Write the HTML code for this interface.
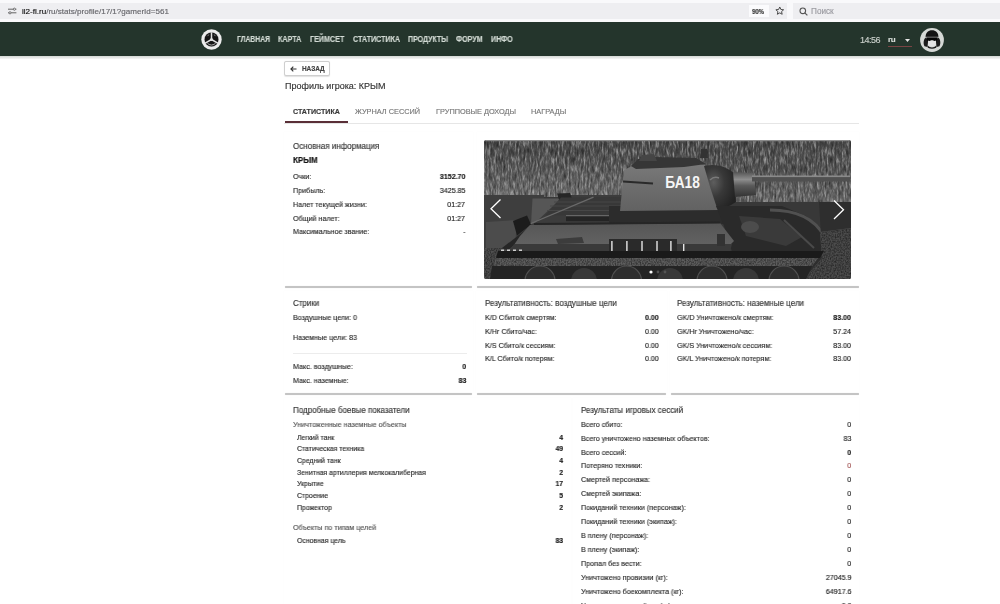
<!DOCTYPE html>
<html><head><meta charset="utf-8"><style>
html,body{margin:0;padding:0;}
body{width:1000px;height:604px;overflow:hidden;position:relative;background:#fff;font-family:"Liberation Sans",sans-serif;}
.t{position:absolute;white-space:nowrap;font-family:"Liberation Sans",sans-serif;-webkit-text-stroke:0.15px currentColor;will-change:transform;}
.nav{color:#d3dbd5;font-weight:bold;text-align:center;letter-spacing:-0.4px;}
</style></head><body>
<div style="position:absolute;left:0px;top:0px;width:1000px;height:22px;background:#f9f9fb;"></div>
<div style="position:absolute;left:0px;top:2.5px;width:787px;height:16.5px;background:#eeeef1;"></div>
<div style="position:absolute;left:793px;top:2.5px;width:207px;height:16.5px;background:#eeeef1;"></div>
<div style="position:absolute;left:748.5px;top:5px;width:20px;height:12px;background:#fbfbfd;"></div>
<div class="t" style="transform:scaleX(0.8562);transform-origin:0 0;top:8px;font-size:7px;line-height:7px;font-weight:bold;color:#333;left:752px;">90%</div>
<div class="t" style="top:8px;font-size:8.05px;line-height:8.05px;font-weight:normal;color:#66666b;left:22px;"><span style="color:#111">il2-fl.ru</span>/ru/stats/profile/17/1?gamerId=561</div>
<svg style="position:absolute;left:6.5px;top:7px" width="10" height="8" viewBox="0 0 10 8"><path d="M1 2.2h5.2M8.6 2.2h0.8M1 5.8h0.8M4.2 5.8h5.2" stroke="#555" stroke-width="0.9" fill="none"/><circle cx="7.4" cy="2.2" r="1.1" stroke="#555" stroke-width="0.8" fill="none"/><circle cx="3" cy="5.8" r="1.1" stroke="#555" stroke-width="0.8" fill="none"/></svg>
<svg style="position:absolute;left:774.5px;top:6px" width="9.5" height="9.5" viewBox="0 0 24 24"><path d="M12 2.5l2.9 6.3 6.9.7-5.2 4.6 1.5 6.8L12 17.4 5.9 20.9l1.5-6.8L2.2 9.5l6.9-.7z" stroke="#444" stroke-width="2.4" fill="none" stroke-linejoin="round"/></svg>
<svg style="position:absolute;left:798.5px;top:6.5px" width="9" height="9" viewBox="0 0 9 9"><circle cx="3.8" cy="3.8" r="2.8" stroke="#555" stroke-width="1.1" fill="none"/><path d="M5.8 5.8l2.6 2.6" stroke="#555" stroke-width="1.2"/></svg>
<div class="t" style="top:8px;font-size:8.2px;line-height:8.2px;font-weight:normal;color:#9a9aa0;left:811px;">Поиск</div>
<div style="position:absolute;left:0px;top:22px;width:1000px;height:34px;background:#24352c;"></div>
<div style="position:absolute;left:0px;top:55.6px;width:1000px;height:3.5px;background:linear-gradient(#d3d7d4,#f6f6f6);"></div>
<svg style="position:absolute;left:200.5px;top:28.5px" width="21" height="21" viewBox="0 0 21 21">
<circle cx="10.5" cy="10.5" r="10.2" fill="#ececec"/><circle cx="10.5" cy="10.5" r="7.6" fill="#cfcfcf"/>
<circle cx="10.5" cy="10.5" r="6.9" fill="#141414"/>
<path d="M10.5 10.5 L10.5 3.2 M10.5 10.5 L4.2 14.1 M10.5 10.5 L16.8 14.1" stroke="#e0e0e0" stroke-width="1.5"/>
<path d="M6.2 13.8 A5.2 5.2 0 0 0 14.8 13.8" stroke="#bdbdbd" stroke-width="0.9" fill="none"/>
<path d="M6.3 7.2 A5 5 0 0 1 8.2 5.6 M12.8 5.6 A5 5 0 0 1 14.7 7.2" stroke="#9a9a9a" stroke-width="0.8" fill="none"/>
<circle cx="10.5" cy="10.5" r="1.5" fill="#e0e0e0"/></svg>
<div class="t" style="transform:scaleX(0.8308);transform-origin:0 0;top:36px;font-size:8.2px;line-height:8.2px;font-weight:bold;color:#d3dbd5;left:237px;">ГЛАВНАЯ</div>
<div class="t" style="transform:scaleX(0.8736);transform-origin:0 0;top:36px;font-size:8.2px;line-height:8.2px;font-weight:bold;color:#d3dbd5;left:278px;">КАРТА</div>
<div class="t" style="transform:scaleX(0.8753);transform-origin:0 0;top:36px;font-size:8.2px;line-height:8.2px;font-weight:bold;color:#d3dbd5;left:310px;">ГЕЙМСЕТ</div>
<div class="t" style="transform:scaleX(0.8689);transform-origin:0 0;top:36px;font-size:8.2px;line-height:8.2px;font-weight:bold;color:#d3dbd5;left:352.5px;">СТАТИСТИКА</div>
<div class="t" style="transform:scaleX(0.8556);transform-origin:0 0;top:36px;font-size:8.2px;line-height:8.2px;font-weight:bold;color:#d3dbd5;left:407.5px;">ПРОДУКТЫ</div>
<div class="t" style="transform:scaleX(0.8718);transform-origin:0 0;top:36px;font-size:8.2px;line-height:8.2px;font-weight:bold;color:#d3dbd5;left:455.8px;">ФОРУМ</div>
<div class="t" style="transform:scaleX(0.8626);transform-origin:0 0;top:36px;font-size:8.2px;line-height:8.2px;font-weight:bold;color:#d3dbd5;left:491.3px;">ИНФО</div>
<div class="t" style="top:36px;font-size:9px;line-height:9px;font-weight:normal;color:#c9cfca;left:860px;letter-spacing:-0.5px;">14:56</div>
<div class="t" style="top:36px;font-size:8px;line-height:8px;font-weight:bold;color:#d8ddd9;left:887.5px;letter-spacing:-0.3px;">ru</div>
<svg style="position:absolute;left:904.5px;top:38.5px" width="5" height="3" viewBox="0 0 5 3"><path d="M0 0h5L2.5 3z" fill="#e8e8e8"/></svg>
<div style="position:absolute;left:887.5px;top:46px;width:24px;height:1px;background:#7a4444;"></div>
<svg style="position:absolute;left:920px;top:28px" width="24" height="24" viewBox="0 0 24 24">
<circle cx="12" cy="12" r="11.9" fill="#d6d9d6"/>
<path d="M5.6 9 C5.6 4.5 8.2 2.2 12 2.2 C15.8 2.2 18.4 4.5 18.4 9 Z" fill="#141414"/>
<path d="M5.8 9.5 C3.5 11 3 15.5 4.5 18.2 L7.5 19 L8.2 12Z M18.2 9.5 C20.5 11 21 15.5 19.5 18.2 L16.5 19 L15.8 12Z" fill="#1b1b1b"/>
<rect x="6" y="8.6" width="12" height="0.9" fill="#6a6a6a"/>
<path d="M6.6 9.5 H17.4 V11.8 Q16.8 13.3 14.6 12.9 L12 12.2 L9.4 12.9 Q7.2 13.3 6.6 11.8Z" fill="#050505"/>
<path d="M8.2 12.6 L9.4 13 L12 12.4 L14.6 13 L15.8 12.6 L15.8 16.8 Q12 20 8.2 16.8Z" fill="#e4e4e4"/>
<path d="M7.5 17.5 Q12 21.5 16.5 17.5 L16.2 19.8 Q12 21.6 7.8 19.8Z" fill="#1b1b1b"/>
</svg>
<div style="position:absolute;left:284px;top:61px;width:45.5px;height:14.5px;border:1px solid #cfcfcf;border-radius:2px;box-sizing:border-box;background:#fff;box-shadow:0 0.5px 1px rgba(0,0,0,.12);"></div>
<svg style="position:absolute;left:289.5px;top:65.5px" width="7" height="6" viewBox="0 0 7 6"><path d="M6.5 3H1M3.3 0.6L0.9 3l2.4 2.4" stroke="#333" stroke-width="1.1" fill="none"/></svg>
<div class="t" style="top:66px;font-size:6.5px;line-height:6.5px;font-weight:bold;color:#444;left:301.6px;letter-spacing:-0.1px;">НАЗАД</div>
<div class="t" style="top:82px;font-size:9px;line-height:9px;font-weight:normal;color:#333;left:284.8px;">Профиль игрока: КРЫМ</div>
<div class="t" style="top:109px;font-size:7.1px;line-height:7.1px;font-weight:bold;color:#3a3a3a;left:292.6px;">СТАТИСТИКА</div>
<div class="t" style="top:108px;font-size:7.35px;line-height:7.35px;font-weight:normal;color:#777;left:355px;">ЖУРНАЛ СЕССИЙ</div>
<div class="t" style="top:108px;font-size:7.35px;line-height:7.35px;font-weight:normal;color:#777;left:436.2px;">ГРУППОВЫЕ ДОХОДЫ</div>
<div class="t" style="top:108px;font-size:7.35px;line-height:7.35px;font-weight:normal;color:#777;left:531.3px;">НАГРАДЫ</div>
<div style="position:absolute;left:284px;top:122.5px;width:575px;height:1px;background:#e6e6e6;"></div>
<div style="position:absolute;left:284.5px;top:121.4px;width:63.2px;height:2px;background:#5a2f37;"></div>
<div style="position:absolute;left:284px;top:132px;width:188.5px;height:154px;background:#fff;box-shadow:0 0 0.7px rgba(0,0,0,0.09);"></div>
<div style="position:absolute;left:284.5px;top:286px;width:187.5px;height:1.6px;background:#c4c4c4;box-shadow:0 0 0.7px #c4c4c4;border-radius:1px;"></div>
<div style="position:absolute;left:476.5px;top:132px;width:382.5px;height:154px;background:#fff;box-shadow:0 0 0.7px rgba(0,0,0,0.09);"></div>
<div style="position:absolute;left:477.0px;top:286px;width:381.5px;height:1.6px;background:#c4c4c4;box-shadow:0 0 0.7px #c4c4c4;border-radius:1px;"></div>
<div style="position:absolute;left:284px;top:290.5px;width:188.5px;height:102.5px;background:#fff;box-shadow:0 0 0.7px rgba(0,0,0,0.09);"></div>
<div style="position:absolute;left:284.5px;top:393px;width:187.5px;height:1.6px;background:#c4c4c4;box-shadow:0 0 0.7px #c4c4c4;border-radius:1px;"></div>
<div style="position:absolute;left:476px;top:290.5px;width:190.5px;height:102.5px;background:#fff;box-shadow:0 0 0.7px rgba(0,0,0,0.09);"></div>
<div style="position:absolute;left:476.5px;top:393px;width:189.5px;height:1.6px;background:#c4c4c4;box-shadow:0 0 0.7px #c4c4c4;border-radius:1px;"></div>
<div style="position:absolute;left:670px;top:290.5px;width:189px;height:102.5px;background:#fff;box-shadow:0 0 0.7px rgba(0,0,0,0.09);"></div>
<div style="position:absolute;left:670.5px;top:393px;width:188px;height:1.6px;background:#c4c4c4;box-shadow:0 0 0.7px #c4c4c4;border-radius:1px;"></div>
<div style="position:absolute;left:284px;top:397.5px;width:287px;height:242.5px;background:#fff;box-shadow:0 0 0.7px rgba(0,0,0,0.09);"></div>
<div style="position:absolute;left:284.5px;top:640px;width:286px;height:1.6px;background:#c4c4c4;box-shadow:0 0 0.7px #c4c4c4;border-radius:1px;"></div>
<div style="position:absolute;left:572.5px;top:397.5px;width:286.5px;height:242.5px;background:#fff;box-shadow:0 0 0.7px rgba(0,0,0,0.09);"></div>
<div style="position:absolute;left:573.0px;top:640px;width:285.5px;height:1.6px;background:#c4c4c4;box-shadow:0 0 0.7px #c4c4c4;border-radius:1px;"></div>
<div class="t" style="top:142px;font-size:8.56px;line-height:8.56px;font-weight:normal;color:#333;left:293px;transform:scaleX(0.9346);transform-origin:0 0;">Основная информация</div>
<div class="t" style="top:156px;font-size:8.56px;line-height:8.56px;font-weight:bold;color:#111;left:293px;transform:scaleX(0.9346);transform-origin:0 0;">КРЫМ</div>
<div class="t" style="top:173px;font-size:7.651px;line-height:7.651px;font-weight:normal;color:#2a2a2a;left:293px;transform:scaleX(0.9346);transform-origin:0 0;">Очки:</div>
<div class="t" style="top:173px;font-size:7.651px;line-height:7.651px;font-weight:bold;color:#1a1a1a;right:534.8px;text-align:right;transform:scaleX(0.9346);transform-origin:100% 0;">3152.70</div>
<div class="t" style="top:187px;font-size:7.651px;line-height:7.651px;font-weight:normal;color:#2a2a2a;left:293px;transform:scaleX(0.9346);transform-origin:0 0;">Прибыль:</div>
<div class="t" style="top:187px;font-size:7.651px;line-height:7.651px;font-weight:normal;color:#1a1a1a;right:534.8px;text-align:right;transform:scaleX(0.9346);transform-origin:100% 0;">3425.85</div>
<div class="t" style="top:201px;font-size:7.651px;line-height:7.651px;font-weight:normal;color:#2a2a2a;left:293px;transform:scaleX(0.9346);transform-origin:0 0;">Налет текущей жизни:</div>
<div class="t" style="top:201px;font-size:7.651px;line-height:7.651px;font-weight:normal;color:#1a1a1a;right:534.8px;text-align:right;transform:scaleX(0.9346);transform-origin:100% 0;">01:27</div>
<div class="t" style="top:215px;font-size:7.651px;line-height:7.651px;font-weight:normal;color:#2a2a2a;left:293px;transform:scaleX(0.9346);transform-origin:0 0;">Общий налет:</div>
<div class="t" style="top:215px;font-size:7.651px;line-height:7.651px;font-weight:normal;color:#1a1a1a;right:534.8px;text-align:right;transform:scaleX(0.9346);transform-origin:100% 0;">01:27</div>
<div class="t" style="top:228px;font-size:7.651px;line-height:7.651px;font-weight:normal;color:#2a2a2a;left:293px;transform:scaleX(0.9346);transform-origin:0 0;">Максимальное звание:</div>
<div class="t" style="top:228px;font-size:7.651px;line-height:7.651px;font-weight:normal;color:#1a1a1a;right:534.8px;text-align:right;transform:scaleX(0.9346);transform-origin:100% 0;">-</div>
<div class="t" style="top:299px;font-size:8.56px;line-height:8.56px;font-weight:normal;color:#333;left:293px;transform:scaleX(0.9346);transform-origin:0 0;">Стрики</div>
<div class="t" style="top:314px;font-size:7.651px;line-height:7.651px;font-weight:normal;color:#2a2a2a;left:293px;transform:scaleX(0.9346);transform-origin:0 0;">Воздушные цели: 0</div>
<div class="t" style="top:334px;font-size:7.651px;line-height:7.651px;font-weight:normal;color:#2a2a2a;left:293px;transform:scaleX(0.9346);transform-origin:0 0;">Наземные цели: 83</div>
<div style="position:absolute;left:293px;top:353px;width:173.5px;height:1px;background:#ececec;"></div>
<div class="t" style="top:363px;font-size:7.651px;line-height:7.651px;font-weight:normal;color:#2a2a2a;left:293px;transform:scaleX(0.9346);transform-origin:0 0;">Макс. воздушные:</div>
<div class="t" style="top:363px;font-size:7.651px;line-height:7.651px;font-weight:bold;color:#1a1a1a;right:533.5px;text-align:right;transform:scaleX(0.9346);transform-origin:100% 0;">0</div>
<div class="t" style="top:377px;font-size:7.651px;line-height:7.651px;font-weight:normal;color:#2a2a2a;left:293px;transform:scaleX(0.9346);transform-origin:0 0;">Макс. наземные:</div>
<div class="t" style="top:377px;font-size:7.651px;line-height:7.651px;font-weight:bold;color:#1a1a1a;right:533.5px;text-align:right;transform:scaleX(0.9346);transform-origin:100% 0;">83</div>
<div class="t" style="top:299px;font-size:8.56px;line-height:8.56px;font-weight:normal;color:#333;left:485.1px;transform:scaleX(0.9346);transform-origin:0 0;">Результативность: воздушные цели</div>
<div class="t" style="top:314px;font-size:7.651px;line-height:7.651px;font-weight:normal;color:#2a2a2a;left:485.1px;transform:scaleX(0.9346);transform-origin:0 0;">K/D Сбито/к смертям:</div>
<div class="t" style="top:314px;font-size:7.651px;line-height:7.651px;font-weight:bold;color:#1a1a1a;right:341.1px;text-align:right;transform:scaleX(0.9346);transform-origin:100% 0;">0.00</div>
<div class="t" style="top:328px;font-size:7.651px;line-height:7.651px;font-weight:normal;color:#2a2a2a;left:485.1px;transform:scaleX(0.9346);transform-origin:0 0;">K/Hr Сбито/час:</div>
<div class="t" style="top:328px;font-size:7.651px;line-height:7.651px;font-weight:normal;color:#1a1a1a;right:341.1px;text-align:right;transform:scaleX(0.9346);transform-origin:100% 0;">0.00</div>
<div class="t" style="top:342px;font-size:7.651px;line-height:7.651px;font-weight:normal;color:#2a2a2a;left:485.1px;transform:scaleX(0.9346);transform-origin:0 0;">K/S Сбито/к сессиям:</div>
<div class="t" style="top:342px;font-size:7.651px;line-height:7.651px;font-weight:normal;color:#1a1a1a;right:341.1px;text-align:right;transform:scaleX(0.9346);transform-origin:100% 0;">0.00</div>
<div class="t" style="top:355px;font-size:7.651px;line-height:7.651px;font-weight:normal;color:#2a2a2a;left:485.1px;transform:scaleX(0.9346);transform-origin:0 0;">K/L Сбито/к потерям:</div>
<div class="t" style="top:355px;font-size:7.651px;line-height:7.651px;font-weight:normal;color:#1a1a1a;right:341.1px;text-align:right;transform:scaleX(0.9346);transform-origin:100% 0;">0.00</div>
<div class="t" style="top:299px;font-size:8.56px;line-height:8.56px;font-weight:normal;color:#333;left:677.2px;transform:scaleX(0.9346);transform-origin:0 0;">Результативность: наземные цели</div>
<div class="t" style="top:314px;font-size:7.651px;line-height:7.651px;font-weight:normal;color:#2a2a2a;left:677.2px;transform:scaleX(0.9346);transform-origin:0 0;">GK/D Уничтожено/к смертям:</div>
<div class="t" style="top:314px;font-size:7.651px;line-height:7.651px;font-weight:bold;color:#1a1a1a;right:148.79999999999995px;text-align:right;transform:scaleX(0.9346);transform-origin:100% 0;">83.00</div>
<div class="t" style="top:328px;font-size:7.651px;line-height:7.651px;font-weight:normal;color:#2a2a2a;left:677.2px;transform:scaleX(0.9346);transform-origin:0 0;">GK/Hr Уничтожено/час:</div>
<div class="t" style="top:328px;font-size:7.651px;line-height:7.651px;font-weight:normal;color:#1a1a1a;right:148.79999999999995px;text-align:right;transform:scaleX(0.9346);transform-origin:100% 0;">57.24</div>
<div class="t" style="top:342px;font-size:7.651px;line-height:7.651px;font-weight:normal;color:#2a2a2a;left:677.2px;transform:scaleX(0.9346);transform-origin:0 0;">GK/S Уничтожено/к сессиям:</div>
<div class="t" style="top:342px;font-size:7.651px;line-height:7.651px;font-weight:normal;color:#1a1a1a;right:148.79999999999995px;text-align:right;transform:scaleX(0.9346);transform-origin:100% 0;">83.00</div>
<div class="t" style="top:355px;font-size:7.651px;line-height:7.651px;font-weight:normal;color:#2a2a2a;left:677.2px;transform:scaleX(0.9346);transform-origin:0 0;">GK/L Уничтожено/к потерям:</div>
<div class="t" style="top:355px;font-size:7.651px;line-height:7.651px;font-weight:normal;color:#1a1a1a;right:148.79999999999995px;text-align:right;transform:scaleX(0.9346);transform-origin:100% 0;">83.00</div>
<div class="t" style="top:406px;font-size:8.56px;line-height:8.56px;font-weight:normal;color:#333;left:292.7px;transform:scaleX(0.9346);transform-origin:0 0;">Подробные боевые показатели</div>
<div class="t" style="top:421px;font-size:7.651px;line-height:7.651px;font-weight:normal;color:#555;left:292.7px;transform:scaleX(0.9346);transform-origin:0 0;">Уничтоженные наземные объекты</div>
<div class="t" style="top:434px;font-size:7.383px;line-height:7.383px;font-weight:normal;color:#2a2a2a;left:297px;transform:scaleX(0.9346);transform-origin:0 0;">Легкий танк</div>
<div class="t" style="top:434px;font-size:7.383px;line-height:7.383px;font-weight:bold;color:#1a1a1a;right:437.1px;text-align:right;transform:scaleX(0.9346);transform-origin:100% 0;">4</div>
<div class="t" style="top:445px;font-size:7.383px;line-height:7.383px;font-weight:normal;color:#2a2a2a;left:297px;transform:scaleX(0.9346);transform-origin:0 0;">Статическая техника</div>
<div class="t" style="top:445px;font-size:7.383px;line-height:7.383px;font-weight:bold;color:#1a1a1a;right:437.1px;text-align:right;transform:scaleX(0.9346);transform-origin:100% 0;">49</div>
<div class="t" style="top:457px;font-size:7.383px;line-height:7.383px;font-weight:normal;color:#2a2a2a;left:297px;transform:scaleX(0.9346);transform-origin:0 0;">Средний танк</div>
<div class="t" style="top:457px;font-size:7.383px;line-height:7.383px;font-weight:bold;color:#1a1a1a;right:437.1px;text-align:right;transform:scaleX(0.9346);transform-origin:100% 0;">4</div>
<div class="t" style="top:469px;font-size:7.383px;line-height:7.383px;font-weight:normal;color:#2a2a2a;left:297px;transform:scaleX(0.9346);transform-origin:0 0;">Зенитная артиллерия мелкокалиберная</div>
<div class="t" style="top:469px;font-size:7.383px;line-height:7.383px;font-weight:bold;color:#1a1a1a;right:437.1px;text-align:right;transform:scaleX(0.9346);transform-origin:100% 0;">2</div>
<div class="t" style="top:480px;font-size:7.383px;line-height:7.383px;font-weight:normal;color:#2a2a2a;left:297px;transform:scaleX(0.9346);transform-origin:0 0;">Укрытие</div>
<div class="t" style="top:480px;font-size:7.383px;line-height:7.383px;font-weight:bold;color:#1a1a1a;right:437.1px;text-align:right;transform:scaleX(0.9346);transform-origin:100% 0;">17</div>
<div class="t" style="top:492px;font-size:7.383px;line-height:7.383px;font-weight:normal;color:#2a2a2a;left:297px;transform:scaleX(0.9346);transform-origin:0 0;">Строение</div>
<div class="t" style="top:492px;font-size:7.383px;line-height:7.383px;font-weight:bold;color:#1a1a1a;right:437.1px;text-align:right;transform:scaleX(0.9346);transform-origin:100% 0;">5</div>
<div class="t" style="top:504px;font-size:7.383px;line-height:7.383px;font-weight:normal;color:#2a2a2a;left:297px;transform:scaleX(0.9346);transform-origin:0 0;">Прожектор</div>
<div class="t" style="top:504px;font-size:7.383px;line-height:7.383px;font-weight:bold;color:#1a1a1a;right:437.1px;text-align:right;transform:scaleX(0.9346);transform-origin:100% 0;">2</div>
<div class="t" style="top:524px;font-size:7.651px;line-height:7.651px;font-weight:normal;color:#555;left:292.7px;transform:scaleX(0.9346);transform-origin:0 0;">Объекты по типам целей</div>
<div class="t" style="top:537px;font-size:7.383px;line-height:7.383px;font-weight:normal;color:#2a2a2a;left:297px;transform:scaleX(0.9346);transform-origin:0 0;">Основная цель</div>
<div class="t" style="top:537px;font-size:7.383px;line-height:7.383px;font-weight:bold;color:#1a1a1a;right:437.1px;text-align:right;transform:scaleX(0.9346);transform-origin:100% 0;">83</div>
<div class="t" style="top:406px;font-size:8.56px;line-height:8.56px;font-weight:normal;color:#333;left:581px;transform:scaleX(0.9346);transform-origin:0 0;">Результаты игровых сессий</div>
<div class="t" style="top:421px;font-size:7.651px;line-height:7.651px;font-weight:normal;color:#2a2a2a;left:581px;transform:scaleX(0.9346);transform-origin:0 0;">Всего сбито:</div>
<div class="t" style="top:421px;font-size:7.651px;line-height:7.651px;font-weight:normal;color:#222;right:148.79999999999995px;text-align:right;transform:scaleX(0.9346);transform-origin:100% 0;">0</div>
<div class="t" style="top:435px;font-size:7.651px;line-height:7.651px;font-weight:normal;color:#2a2a2a;left:581px;transform:scaleX(0.9346);transform-origin:0 0;">Всего уничтожено наземных объектов:</div>
<div class="t" style="top:435px;font-size:7.651px;line-height:7.651px;font-weight:normal;color:#222;right:148.79999999999995px;text-align:right;transform:scaleX(0.9346);transform-origin:100% 0;">83</div>
<div class="t" style="top:449px;font-size:7.651px;line-height:7.651px;font-weight:normal;color:#2a2a2a;left:581px;transform:scaleX(0.9346);transform-origin:0 0;">Всего сессий:</div>
<div class="t" style="top:449px;font-size:7.651px;line-height:7.651px;font-weight:bold;color:#222;right:148.79999999999995px;text-align:right;transform:scaleX(0.9346);transform-origin:100% 0;">0</div>
<div class="t" style="top:462px;font-size:7.651px;line-height:7.651px;font-weight:normal;color:#2a2a2a;left:581px;transform:scaleX(0.9346);transform-origin:0 0;">Потеряно техники:</div>
<div class="t" style="top:462px;font-size:7.651px;line-height:7.651px;font-weight:normal;color:#a05050;right:148.79999999999995px;text-align:right;transform:scaleX(0.9346);transform-origin:100% 0;">0</div>
<div class="t" style="top:476px;font-size:7.651px;line-height:7.651px;font-weight:normal;color:#2a2a2a;left:581px;transform:scaleX(0.9346);transform-origin:0 0;">Смертей персонажа:</div>
<div class="t" style="top:476px;font-size:7.651px;line-height:7.651px;font-weight:normal;color:#222;right:148.79999999999995px;text-align:right;transform:scaleX(0.9346);transform-origin:100% 0;">0</div>
<div class="t" style="top:490px;font-size:7.651px;line-height:7.651px;font-weight:normal;color:#2a2a2a;left:581px;transform:scaleX(0.9346);transform-origin:0 0;">Смертей экипажа:</div>
<div class="t" style="top:490px;font-size:7.651px;line-height:7.651px;font-weight:normal;color:#222;right:148.79999999999995px;text-align:right;transform:scaleX(0.9346);transform-origin:100% 0;">0</div>
<div class="t" style="top:504px;font-size:7.651px;line-height:7.651px;font-weight:normal;color:#2a2a2a;left:581px;transform:scaleX(0.9346);transform-origin:0 0;">Покиданий техники (персонаж):</div>
<div class="t" style="top:504px;font-size:7.651px;line-height:7.651px;font-weight:normal;color:#222;right:148.79999999999995px;text-align:right;transform:scaleX(0.9346);transform-origin:100% 0;">0</div>
<div class="t" style="top:518px;font-size:7.651px;line-height:7.651px;font-weight:normal;color:#2a2a2a;left:581px;transform:scaleX(0.9346);transform-origin:0 0;">Покиданий техники (экипаж):</div>
<div class="t" style="top:518px;font-size:7.651px;line-height:7.651px;font-weight:normal;color:#222;right:148.79999999999995px;text-align:right;transform:scaleX(0.9346);transform-origin:100% 0;">0</div>
<div class="t" style="top:532px;font-size:7.651px;line-height:7.651px;font-weight:normal;color:#2a2a2a;left:581px;transform:scaleX(0.9346);transform-origin:0 0;">В плену (персонаж):</div>
<div class="t" style="top:532px;font-size:7.651px;line-height:7.651px;font-weight:normal;color:#222;right:148.79999999999995px;text-align:right;transform:scaleX(0.9346);transform-origin:100% 0;">0</div>
<div class="t" style="top:546px;font-size:7.651px;line-height:7.651px;font-weight:normal;color:#2a2a2a;left:581px;transform:scaleX(0.9346);transform-origin:0 0;">В плену (экипаж):</div>
<div class="t" style="top:546px;font-size:7.651px;line-height:7.651px;font-weight:normal;color:#222;right:148.79999999999995px;text-align:right;transform:scaleX(0.9346);transform-origin:100% 0;">0</div>
<div class="t" style="top:560px;font-size:7.651px;line-height:7.651px;font-weight:normal;color:#2a2a2a;left:581px;transform:scaleX(0.9346);transform-origin:0 0;">Пропал без вести:</div>
<div class="t" style="top:560px;font-size:7.651px;line-height:7.651px;font-weight:normal;color:#222;right:148.79999999999995px;text-align:right;transform:scaleX(0.9346);transform-origin:100% 0;">0</div>
<div class="t" style="top:574px;font-size:7.651px;line-height:7.651px;font-weight:normal;color:#2a2a2a;left:581px;transform:scaleX(0.9346);transform-origin:0 0;">Уничтожено провизии (кг):</div>
<div class="t" style="top:574px;font-size:7.651px;line-height:7.651px;font-weight:normal;color:#222;right:148.79999999999995px;text-align:right;transform:scaleX(0.9346);transform-origin:100% 0;">27045.9</div>
<div class="t" style="top:588px;font-size:7.651px;line-height:7.651px;font-weight:normal;color:#2a2a2a;left:581px;transform:scaleX(0.9346);transform-origin:0 0;">Уничтожено боекомплекта (кг):</div>
<div class="t" style="top:588px;font-size:7.651px;line-height:7.651px;font-weight:normal;color:#222;right:148.79999999999995px;text-align:right;transform:scaleX(0.9346);transform-origin:100% 0;">64917.6</div>
<div class="t" style="top:602px;font-size:7.651px;line-height:7.651px;font-weight:normal;color:#2a2a2a;left:581px;transform:scaleX(0.9346);transform-origin:0 0;">Уничтожено самолётов (кг):</div>
<div class="t" style="top:602px;font-size:7.651px;line-height:7.651px;font-weight:normal;color:#222;right:148.79999999999995px;text-align:right;transform:scaleX(0.9346);transform-origin:100% 0;">0.0</div>
<svg style="position:absolute;left:484px;top:139.5px" width="367" height="139" viewBox="0 0 367 139">
<defs>
<clipPath id="rc"><rect width="367" height="139" rx="2.5"/></clipPath>
<filter id="grass" x="0" y="0" width="100%" height="100%" color-interpolation-filters="sRGB">
<feTurbulence type="fractalNoise" baseFrequency="0.55 0.12" numOctaves="3" seed="3" result="n0"/><feGaussianBlur in="n0" stdDeviation="0.5" result="n"/>
<feColorMatrix type="saturate" values="0" in="n" result="g"/>
<feComponentTransfer in="g" result="k"><feFuncR type="linear" slope="0.75" intercept="0.125"/><feFuncG type="linear" slope="0.75" intercept="0.125"/><feFuncB type="linear" slope="0.75" intercept="0.125"/><feFuncA type="linear" slope="0" intercept="1"/></feComponentTransfer>
<feComposite in="k" in2="SourceGraphic" operator="in" result="c"/>
<feBlend in="SourceGraphic" in2="c" mode="overlay"/>
</filter>
<filter id="noise" x="0" y="0" width="100%" height="100%" color-interpolation-filters="sRGB">
<feTurbulence type="fractalNoise" baseFrequency="0.8 0.6" numOctaves="2" seed="7" result="n"/>
<feColorMatrix type="matrix" values="0 0 0 0 0.4  0 0 0 0 0.4  0 0 0 0 0.4  0 0 0 -1.6 1.1" in="n" result="m"/>
<feComposite in="m" in2="SourceGraphic" operator="in" result="c"/>
<feBlend in="SourceGraphic" in2="c" mode="multiply"/>
</filter>
<filter id="soft"><feGaussianBlur stdDeviation="0.5"/></filter>
<linearGradient id="gG" x1="0" y1="0" x2="0" y2="1">
<stop offset="0" stop-color="#484848"/><stop offset="0.5" stop-color="#585858"/><stop offset="1" stop-color="#6c6c6c"/>
</linearGradient>
<linearGradient id="gR" x1="0" y1="0" x2="0" y2="1">
<stop offset="0" stop-color="#4a4a4a"/><stop offset="0.6" stop-color="#565656"/><stop offset="1" stop-color="#666"/>
</linearGradient>
<linearGradient id="turG" x1="0" y1="0" x2="0" y2="1">
<stop offset="0" stop-color="#7a7a7a"/><stop offset="0.45" stop-color="#6e6e6e"/><stop offset="1" stop-color="#626262"/>
</linearGradient>
<linearGradient id="hullG" x1="0" y1="0" x2="0" y2="1">
<stop offset="0" stop-color="#565656"/><stop offset="1" stop-color="#626262"/>
</linearGradient>
<radialGradient id="mantG" cx="0.3" cy="0.4" r="0.75">
<stop offset="0" stop-color="#5e5e5e"/><stop offset="0.45" stop-color="#383838"/><stop offset="1" stop-color="#222"/>
</radialGradient>
<linearGradient id="cylG" x1="0" y1="0" x2="0" y2="1">
<stop offset="0" stop-color="#555"/><stop offset="0.3" stop-color="#8e8e8e"/><stop offset="0.55" stop-color="#5a5a5a"/><stop offset="1" stop-color="#333"/>
</linearGradient>
</defs>
<g clip-path="url(#rc)">
<rect width="367" height="139" fill="#383838"/>
<!-- grass -->
<g filter="url(#grass)">
<rect x="0" y="0" width="230" height="57" fill="url(#gG)"/>
<rect x="230" y="0" width="137" height="62" fill="url(#gR)"/>
</g>
<rect x="0" y="0" width="367" height="1.2" fill="#8a8a8a"/>
<!-- left dark area -->
<rect x="0" y="55" width="60" height="58" fill="#3e3e3e"/>
<path d="M2 82 L33 80 L31 107 L2 110Z" fill="#4c4c4c"/>
<rect x="0" y="108" width="22" height="31" fill="#505050" filter="url(#noise)"/>
<!-- engine deck -->
<path d="M38 84 L84 55 L140 55 L140 83 L45 86Z" fill="#3c3c3c"/>
<path d="M48.5 58.5 L77 58.5 L51 83 L47 84Z" fill="#565656"/>
<path d="M73 53.5 L86 53 L89 61 L76 63Z" fill="#262626"/>
<path d="M77 57.5 L137 57 L137 75.5 L61 75.5Z" fill="#383838"/>
<path d="M70 62 L137 62 M66 66 L137 66 M63 70.5 L137 70.5" stroke="#474747" stroke-width="1"/>
<path d="M44.5 84.5 L109.5 57.2" stroke="#6a6a6a" stroke-width="1.3"/>
<rect x="82" y="76" width="57.5" height="5.2" fill="#242424"/>
<rect x="82" y="75.3" width="57.5" height="0.9" fill="#7a7a7a"/>
<!-- rear plate -->
<path d="M29 81 L43 75.5 L47 84.5 L33 95.5Z" fill="#1c1c1c"/>
<path d="M18 108 L44 88 L48 91 L24 110Z" fill="#262626"/>
<!-- below turret -->
<rect x="125" y="66" width="125" height="18" fill="#2c2c2c"/>
<!-- turret -->
<path d="M136 71 L140 30 L150 25 L205 22 L221 25 L230 48 L235 70Z" fill="url(#turG)"/>
<path d="M147 26 L154 19 L170 17 L212 18 L222 24 L200 27 L152 29Z" fill="#363636"/>
<path d="M155 21 L158 15 L170 14 L173 21Z" fill="#454545"/>
<path d="M139 41.5 L169 43.5" stroke="#2a2a2a" stroke-width="2.2"/>
<path d="M216 18 L217 9 L223 9 L224 18Z" fill="#333"/>
<text x="181.3" y="48.2" font-family="Liberation Sans" font-size="16" font-weight="bold" fill="#f6f6f6" textLength="34.5" lengthAdjust="spacingAndGlyphs">БА18</text>
<!-- mantlet dome -->
<path d="M220 26 Q238 22 251 34 L252 62 Q240 70 233 68 Q226 48 220 26Z" fill="url(#mantG)"/>
<path d="M226 40 Q230 36 235 38" stroke="#7a7a7a" stroke-width="1.5" fill="none"/>
<path d="M249 32 L270 33 L272 55 L251 57Z" fill="url(#cylG)"/>
<!-- barrel -->
<rect x="268" y="36" width="98" height="5.5" fill="#505050"/>
<rect x="268" y="35.5" width="98" height="1.6" fill="#8a8a8a"/>
<!-- front hull dark -->
<path d="M232 66 L298 66 L322 76 L342 98 L334 118 L300 122 L248 112 L240 86Z" fill="#2a2a2a"/>
<path d="M255 76 L296 79 L318 97 L302 106 L262 96Z" fill="#3a3a3a"/>
<ellipse cx="266" cy="87" rx="9" ry="6" fill="#4c4c4c"/>
<path d="M286 70 Q326 70 340 96" stroke="#505050" stroke-width="3" fill="none"/>
<path d="M300 80 L330 108" stroke="#4a4a4a" stroke-width="2"/>
<!-- ground right -->
<path d="M335 62 L367 62 L367 139 L318 139 L338 112Z" fill="#2e2e2e"/>
<path d="M336 92 L367 88 L367 139 L320 139 L338 118Z" fill="#4c4c4c" filter="url(#noise)"/>
<!-- hull side -->
<path d="M46 85 L236 83 L250 101 L246 105 L30 105 L36 96Z" fill="url(#hullG)"/>
<path d="M50 84 L236 82.5" stroke="#262626" stroke-width="2.2"/>
<!-- tools band -->
<path d="M30 104 L248 104 L246 112 L26 112Z" fill="#3a3a3a"/>
<path d="M72 99 L98 97 L100 103 L74 104Z" fill="#3c3c3c"/>
<rect x="125" y="99" width="68" height="13" fill="#2a2a2a"/>
<g fill="#e6e6e6">
<rect x="127.2" y="101" width="1.4" height="10"/><rect x="142.2" y="101" width="1.4" height="10"/><rect x="157.3" y="101" width="1.4" height="10"/><rect x="172.3" y="101" width="1.4" height="10"/><rect x="186.2" y="101" width="1.4" height="10"/>
<rect x="199" y="104" width="1.4" height="7"/>
</g>
<rect x="233" y="94" width="8" height="12" fill="#333"/>
<!-- dark band -->
<path d="M14 111 L340 111 L336 118 L12 118Z" fill="#1a1a1a"/>
<g fill="#cfcfcf"><rect x="17" y="109.5" width="3" height="1.5"/><rect x="23" y="109.5" width="3" height="1.5"/><rect x="29" y="109.5" width="3" height="1.5"/><rect x="35" y="109.5" width="3" height="1.5"/></g>
<!-- tracks -->
<path d="M12 118 L334 118 L328 126 L10 126Z" fill="#5e5e5e" filter="url(#noise)"/>
<!-- wheels -->
<path d="M8 126 L328 126 L322 139 L6 139Z" fill="#242424"/>
<g fill="#2e2e2e" stroke="#505050" stroke-width="1.2">
<circle cx="56" cy="141" r="15"/><circle cx="142.5" cy="141" r="15"/><circle cx="228" cy="141" r="15"/><circle cx="300" cy="141" r="15"/>
</g>
<g fill="#383838"><circle cx="100" cy="141" r="13"/><circle cx="186" cy="141" r="13"/><circle cx="262" cy="141" r="13"/></g>
<!-- controls -->
<path d="M16.5 59.5 L7 68.8 L16.5 78" stroke="#fff" stroke-width="1.3" fill="none"/>
<path d="M350 60.5 L359.5 69.8 L350 79" stroke="#fff" stroke-width="1.3" fill="none"/>
<circle cx="167" cy="132" r="1.6" fill="#fff"/>
<circle cx="174" cy="132" r="1.4" fill="#555"/>
<circle cx="181" cy="132" r="1.4" fill="#555"/>
</g>
</svg>

</body></html>
